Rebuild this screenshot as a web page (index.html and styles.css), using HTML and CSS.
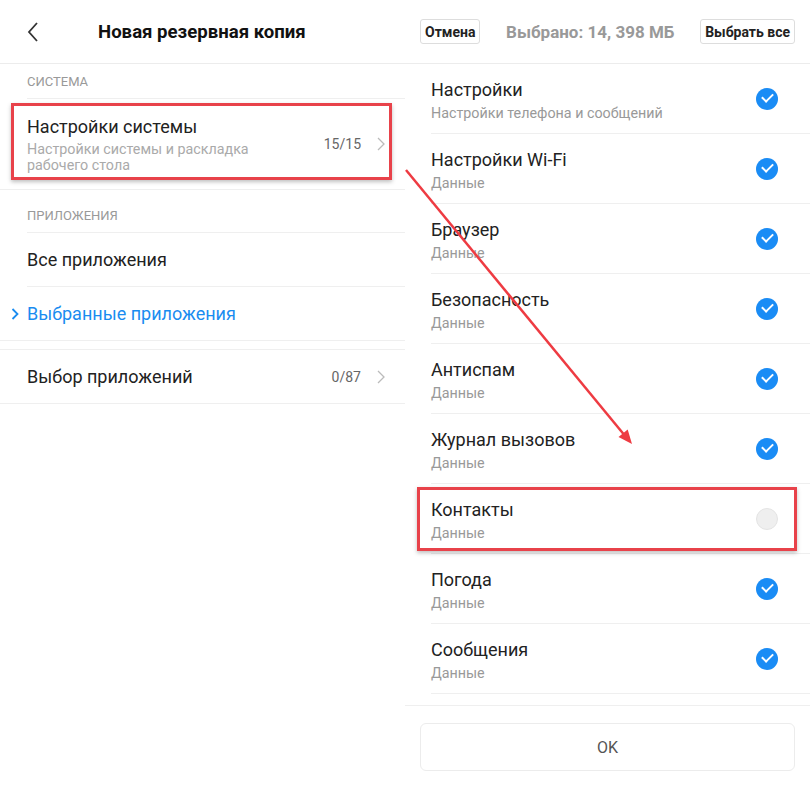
FILE: index.html
```html
<!DOCTYPE html>
<html lang="ru">
<head>
    <meta charset="UTF-8">
    <meta name="viewport" content="width=device-width, initial-scale=1.0">
    <title>Новая резервная копия</title>
    <link rel="stylesheet" href="styles.css">
</head>
<body>
    <div class="screen">
        <!-- левая панель -->
        <div class="pane">
            <div class="topbar">
                <svg class="back" width="12" height="20" viewBox="0 0 12 20"><path d="M10 1 L2 10 L10 19" fill="none" stroke="#333" stroke-width="1.8"/></svg>
                <h1>Новая резервная копия</h1>
            </div>
            <div class="label">СИСТЕМА</div>
            <div class="item tall marked">
                <div class="item-text">
                    <div class="item-title">Настройки системы</div>
                    <div class="item-sub">Настройки системы и раскладка рабочего стола</div>
                </div>
                <span class="count">15/15</span>
                <svg class="chevron" width="8" height="14" viewBox="0 0 8 14"><path d="M1 1 L7 7 L1 13" fill="none" stroke="#bbb" stroke-width="1.3"/></svg>
            </div>
            <div class="label second">ПРИЛОЖЕНИЯ</div>
            <div class="item inset">
                <div class="item-title">Все приложения</div>
            </div>
            <div class="item active">
                <svg class="pointer" width="8" height="12" viewBox="0 0 8 12"><path d="M1.5 1 L6.5 6 L1.5 11" fill="none" stroke="#1a8cf0" stroke-width="1.8"/></svg>
                <div class="item-title">Выбранные приложения</div>
            </div>
            <div class="gap"></div>
            <div class="item">
                <div class="item-title">Выбор приложений</div>
                <span class="count">0/87</span>
                <svg class="chevron" width="8" height="14" viewBox="0 0 8 14"><path d="M1 1 L7 7 L1 13" fill="none" stroke="#bbb" stroke-width="1.3"/></svg>
            </div>
        </div>

        <!-- правая панель -->
        <div class="pane right">
            <div class="topbar spread">
                <button class="small-btn">Отмена</button>
                <span class="selected">Выбрано: 14, 398 МБ</span>
                <button class="small-btn">Выбрать все</button>
            </div>
            <div class="list">
                <div class="row"><div class="row-text"><div class="row-title">Настройки</div><div class="row-sub">Настройки телефона и сообщений</div></div><span class="check on"></span></div>
                <div class="row"><div class="row-text"><div class="row-title">Настройки Wi-Fi</div><div class="row-sub">Данные</div></div><span class="check on"></span></div>
                <div class="row"><div class="row-text"><div class="row-title">Браузер</div><div class="row-sub">Данные</div></div><span class="check on"></span></div>
                <div class="row"><div class="row-text"><div class="row-title">Безопасность</div><div class="row-sub">Данные</div></div><span class="check on"></span></div>
                <div class="row"><div class="row-text"><div class="row-title">Антиспам</div><div class="row-sub">Данные</div></div><span class="check on"></span></div>
                <div class="row"><div class="row-text"><div class="row-title">Журнал вызовов</div><div class="row-sub">Данные</div></div><span class="check on"></span></div>
                <div class="row marked"><div class="row-text"><div class="row-title">Контакты</div><div class="row-sub">Данные</div></div><span class="check"></span></div>
                <div class="row"><div class="row-text"><div class="row-title">Погода</div><div class="row-sub">Данные</div></div><span class="check on"></span></div>
                <div class="row"><div class="row-text"><div class="row-title">Сообщения</div><div class="row-sub">Данные</div></div><span class="check on"></span></div>
            </div>
            <div class="footer">
                <button class="ok-btn">OK</button>
            </div>
        </div>

        <!-- стрелка поверх -->
        <svg class="arrow" width="810" height="788" viewBox="0 0 810 788">
            <line x1="406" y1="170" x2="626" y2="437" stroke="#ee3b42" stroke-width="2.5"/>
            <polygon points="632,444 618.5,437 627.7,429.4" fill="#ee3b42"/>
        </svg>
    </div>
</body>
</html>
```

FILE: styles.css
```css
body {
    margin: 0;
    font-family: Roboto, "Noto Sans", sans-serif;
    background: #fff;
    color: #222;
}
.screen {
    position: relative;
    width: 810px;
    height: 788px;
    display: grid;
    grid-template-columns: 405px 405px;
    overflow: hidden;
}
.pane {
    display: flex;
    flex-direction: column;
}
.topbar {
    height: 63px;
    border-bottom: 1px solid #ececec;
    display: flex;
    align-items: center;
}
.back {
    margin-left: 27px;
    margin-right: 59px;
}
h1 {
    margin: 0;
    font-size: 18.6px;
    font-weight: bold;
    color: #111;
}
.label {
    margin-left: 27px;
    padding: 10px 0 8px;
    line-height: 16px;
    font-size: 13px;
    color: #999;
    border-bottom: 1px solid #efefef;
}
.label.second {
    padding-top: 18px;
}
.item {
    position: relative;
    height: 53px;
    padding-left: 27px;
    padding-right: 20px;
    display: flex;
    align-items: center;
    border-bottom: 1px solid #efefef;
}
.item.tall {
    height: 90px;
}
.item.inset {
    margin-left: 27px;
    padding-left: 0;
}
.item-text {
    flex: 1;
}
.item-title {
    flex: 1;
    font-size: 18px;
    line-height: 22px;
    color: #222;
}
.item-sub {
    width: 260px;
    margin-top: 3px;
    font-size: 14.3px;
    line-height: 16px;
    color: #aaa;
}
.count {
    font-size: 14px;
    color: #666;
    margin-right: 16px;
}
.item.active .item-title {
    color: #1a8cf0;
}
.pointer {
    position: absolute;
    left: 11px;
}
.gap {
    height: 8px;
    border-bottom: 1px solid #efefef;
}
.marked::after {
    content: "";
    position: absolute;
    top: 4px;
    left: 11px;
    right: 13px;
    bottom: 9px;
    border: 3px solid #e8424a;
    box-shadow: 0 2px 4px rgba(0, 0, 0, 0.25);
}

.spread {
    justify-content: space-between;
    padding: 0 15px;
}
.small-btn {
    height: 25px;
    padding: 0 4px;
    font-family: inherit;
    font-size: 14px;
    font-weight: bold;
    color: #222;
    background: #fff;
    border: 1px solid #ddd;
    border-radius: 3px;
}
.selected {
    font-size: 17px;
    font-weight: bold;
    color: #999;
}
.list {
    padding-bottom: 11px;
    border-bottom: 1px solid #efefef;
}
.row {
    position: relative;
    height: 66px;
    padding-top: 3px;
    margin-left: 26px;
    padding-right: 32px;
    display: flex;
    align-items: center;
    border-bottom: 1px solid #efefef;
}
.row-text {
    flex: 1;
}
.row-title {
    font-size: 18px;
    line-height: 22px;
    color: #222;
}
.row-sub {
    margin-top: 3px;
    font-size: 14.3px;
    line-height: 18px;
    color: #999;
}
.row.marked::after {
    top: 3px;
    left: -14px;
    right: 13px;
    bottom: 2px;
}
.check {
    width: 20px;
    height: 20px;
    margin-top: -3px;
    border-radius: 50%;
    background: #efefef;
    border: 1px solid #e4e4e4;
    position: relative;
}
.check.on {
    width: 22px;
    height: 22px;
    border: none;
    background: #1a8cf5;
}
.check.on::after {
    content: "";
    position: absolute;
    left: 6px;
    top: 5px;
    width: 9px;
    height: 5px;
    border-left: 2px solid #fff;
    border-bottom: 2px solid #fff;
    transform: rotate(-45deg);
}
.footer {
    padding: 17px 15px;
}
.ok-btn {
    width: 100%;
    height: 48px;
    font-family: inherit;
    font-size: 16px;
    color: #555;
    background: #fff;
    border: 1px solid #ececec;
    border-radius: 6px;
}
.arrow {
    position: absolute;
    top: 0;
    left: 0;
    pointer-events: none;
}
```
